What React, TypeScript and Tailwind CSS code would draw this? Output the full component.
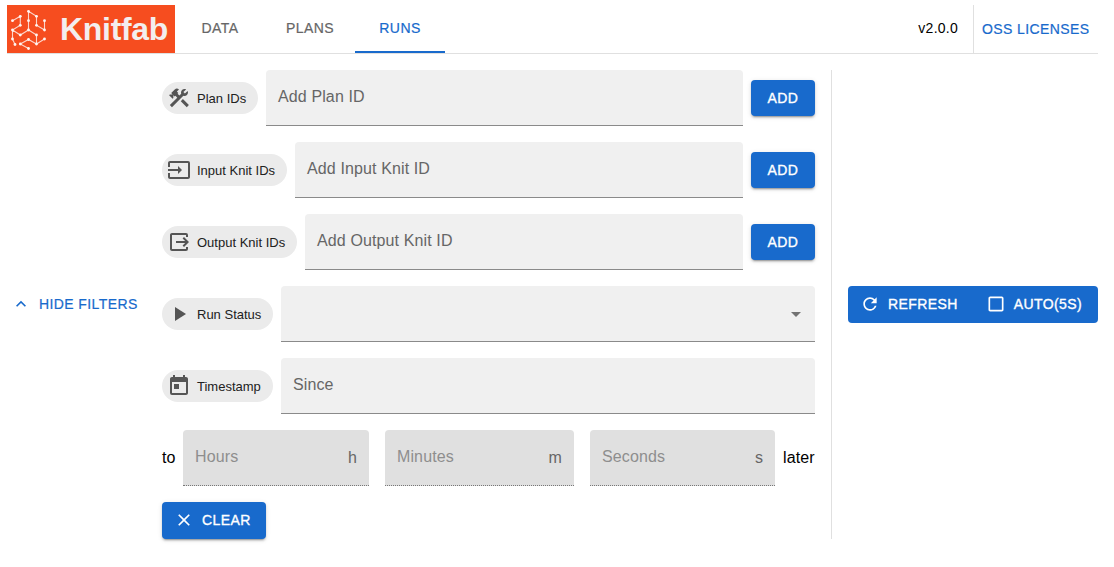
import type { ReactNode } from "react";
import {
  MdConstruction,
  MdInput,
  MdOutput,
  MdPlayArrow,
  MdToday,
  MdExpandLess,
  MdClose,
  MdRefresh,
  MdCheckBoxOutlineBlank,
  MdArrowDropDown,
} from "react-icons/md";

const SHADOW =
  "shadow-[0px_3px_1px_-2px_rgba(0,0,0,0.2),0px_2px_2px_0px_rgba(0,0,0,0.14),0px_1px_5px_0px_rgba(0,0,0,0.12)]";

const BUTTON_TEXT = "text-sm tracking-[0.4px] whitespace-nowrap text-white [-webkit-text-stroke:0.35px_white]";

const LOGO_NODES: [number, number][] = [
  [5.5, 15.7], [13.3, 11.3], [13.3, 20.3], [5.5, 25], [13.3, 30], [5.5, 34], [8, 39.5],
  [21.5, 6.3], [29.5, 11.3], [29.5, 20.3], [37.5, 25], [37.5, 15.7],
  [21.5, 15.7], [21.5, 25], [29.5, 30], [37.5, 34], [29.5, 39], [21.5, 34.5], [13.3, 39], [21.5, 43.5],
];

function Logo() {
  return (
    <div className="flex h-12 w-[168px] shrink-0 items-center bg-[#f64d1f]">
      <svg viewBox="0 0 48 48" className="h-12 w-12 shrink-0" fill="none" stroke="#fbd5ca" strokeWidth="1.1">
        <path d="M5.5 15.7L13.3 11.3V20.3L5.5 25L13.3 30L21.5 25L29.5 30M5.5 25V34L8 39.5M21.5 15.7V25M21.5 15.7V6.3L29.5 11.3V20.3L37.5 25V15.7M29.5 30V39L37.5 34M29.5 39L21.5 34.5L13.3 39L21.5 43.5" />
        {LOGO_NODES.map(([x, y]) => (
          <circle key={`${x}-${y}`} cx={x} cy={y} r="1.4" fill="#fff5f2" stroke="none" />
        ))}
      </svg>
      <span className="ml-[5px] text-[32px] leading-none font-bold tracking-[-0.3px] text-[#f3eeee]">Knitfab</span>
    </div>
  );
}

function Tab({ label, active }: { label: string; active?: boolean }) {
  return (
    <div
      className={`flex h-12 w-[90px] items-center justify-center border-b-2 text-sm tracking-[0.4px] ${
        active
          ? "border-[#186acc] text-[#186acc] [-webkit-text-stroke:0.2px_#186acc]"
          : "border-transparent text-[#666] [-webkit-text-stroke:0.2px_#666]"
      }`}
    >
      {label}
    </div>
  );
}

function Chip({ icon, label, width }: { icon: ReactNode; label: string; width: string }) {
  return (
    <div className={`flex h-8 shrink-0 items-center rounded-full bg-[#ebebeb] pl-[5px] text-[13px] text-[#212121] ${width}`}>
      <span className="mr-1.5 text-2xl text-[#555]">{icon}</span>
      <span className="pt-0.5 whitespace-nowrap">{label}</span>
    </div>
  );
}

function Field({ label, children }: { label?: string; children?: ReactNode }) {
  return (
    <div className="flex h-14 flex-1 items-center justify-between rounded-t border-b border-[#8a8a8a] bg-[#f0f0f0] px-3 text-base tracking-[0.12px] text-[#666]">
      <span className="pb-0.5">{label}</span>
      {children}
    </div>
  );
}

function DurationField({ label, unit, width }: { label: string; unit: string; width: string }) {
  return (
    <div
      className={`flex h-14 items-center justify-between rounded-t border-b border-dotted border-[#777] bg-[#e0e0e0] px-3 text-base tracking-[0.12px] ${width}`}
    >
      <span className="pb-0.5 text-[#8e8e8e]">{label}</span>
      <span className="text-[#666]">{unit}</span>
    </div>
  );
}

function AddButton() {
  return <button className={`h-9 w-16 rounded bg-[#186acc] ${BUTTON_TEXT} ${SHADOW}`}>ADD</button>;
}

export default function App() {
  return (
    <div className="h-[567px] w-[1114px] bg-white px-[7px] pt-[5px] font-['Liberation_Sans',Arial,sans-serif] text-black">
      <header className="flex h-[49px] w-[1091px] border-b border-[#e0e0e0]">
        <Logo />
        <nav className="flex flex-1">
          <Tab label="DATA" />
          <Tab label="PLANS" />
          <Tab label="RUNS" active />
        </nav>
        <div className="flex items-center pr-[15px] pb-0.5 text-sm tracking-[0.25px]">v2.0.0</div>
        <div className="flex w-[125px] items-center border-l border-[#e0e0e0] pl-2 text-sm tracking-[0.4px] whitespace-nowrap text-[#186acc] [-webkit-text-stroke:0.2px_#186acc]">
          OSS LICENSES
        </div>
      </header>

      <main className="mt-4 flex h-[469px] w-[1091px]">
        <button className="flex w-[155px] items-center pl-1 text-sm tracking-[0.4px] whitespace-nowrap text-[#186acc] [-webkit-text-stroke:0.2px_#186acc]">
          <MdExpandLess className="mr-2 mb-px size-5" />
          <span className="pb-0.5">HIDE FILTERS</span>
        </button>

        <section className="flex w-[653px] flex-col gap-4">
          <div className="flex items-center gap-2">
            <Chip icon={<MdConstruction />} label="Plan IDs" width="w-24" />
            <Field label="Add Plan ID" />
            <AddButton />
          </div>
          <div className="flex items-center gap-2">
            <Chip icon={<MdInput />} label="Input Knit IDs" width="w-[125px]" />
            <Field label="Add Input Knit ID" />
            <AddButton />
          </div>
          <div className="flex items-center gap-2">
            <Chip icon={<MdOutput />} label="Output Knit IDs" width="w-[135px]" />
            <Field label="Add Output Knit ID" />
            <AddButton />
          </div>
          <div className="flex items-center gap-2">
            <Chip icon={<MdPlayArrow />} label="Run Status" width="w-[111px]" />
            <Field>
              <MdArrowDropDown className="-mr-[5px] size-6 text-[#737373]" />
            </Field>
          </div>
          <div className="flex items-center gap-2">
            <Chip icon={<MdToday />} label="Timestamp" width="w-[111px]" />
            <Field label="Since" />
          </div>
          <div className="flex items-center">
            <span className="w-[21px]">to</span>
            <div className="flex flex-1 gap-4">
              <DurationField label="Hours" unit="h" width="w-[186px]" />
              <DurationField label="Minutes" unit="m" width="w-[189px]" />
              <DurationField label="Seconds" unit="s" width="w-[185px]" />
            </div>
            <span className="w-8 tracking-[0.1px]">later</span>
          </div>
          <button className={`flex h-[37px] w-[104px] items-center rounded bg-[#186acc] pl-3 ${BUTTON_TEXT} ${SHADOW}`}>
            <MdClose className="mr-2 mb-px size-5" />
            <span className="pb-0.5">CLEAR</span>
          </button>
        </section>

        <div className="ml-4 w-px bg-[#e0e0e0]" />

        <div className="ml-4 flex items-center">
          <div className={`flex h-[37px] w-[250px] items-center rounded bg-[#186acc] ${BUTTON_TEXT}`}>
            <MdRefresh className="mb-px ml-3 size-5" />
            <span className="ml-2 pb-0.5">REFRESH</span>
            <MdCheckBoxOutlineBlank className="mb-px ml-7 size-5" />
            <span className="ml-2 pb-0.5">AUTO(5S)</span>
          </div>
        </div>
      </main>
    </div>
  );
}
